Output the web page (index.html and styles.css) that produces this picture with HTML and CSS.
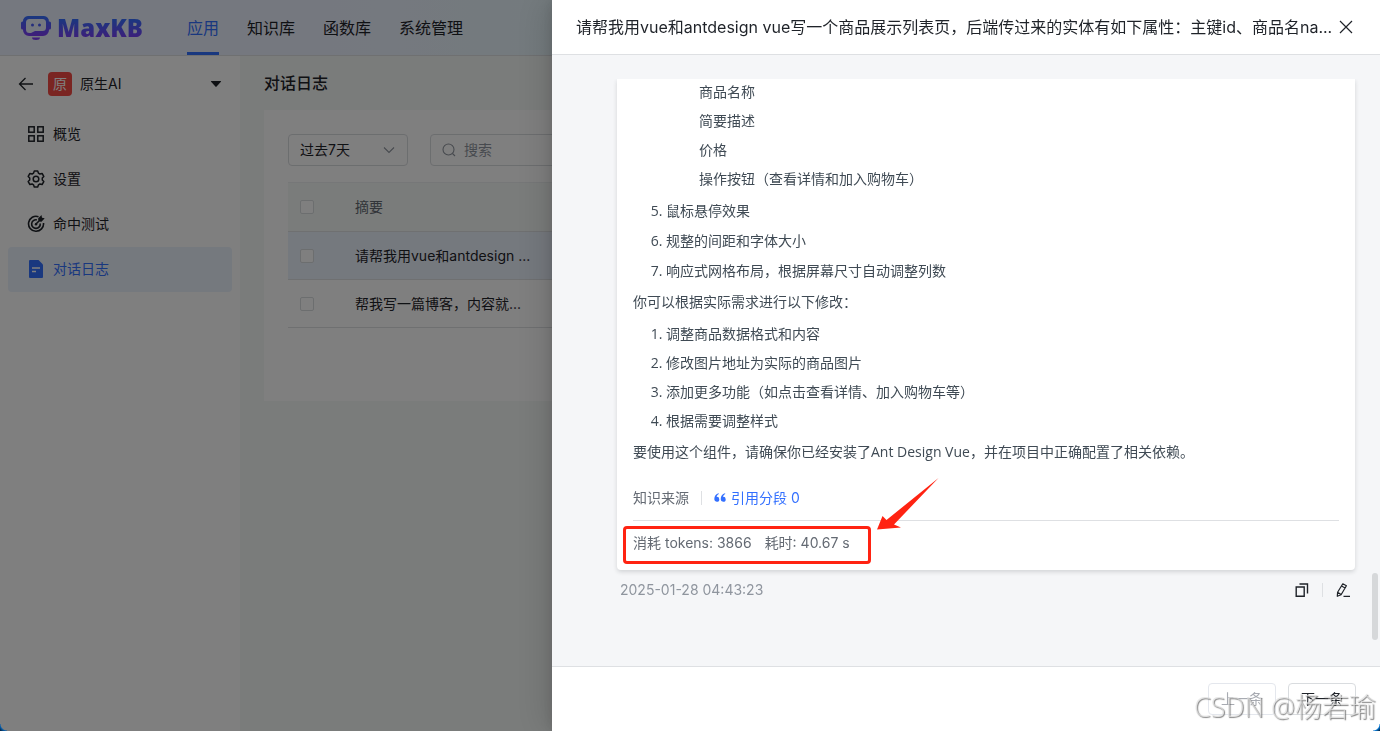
FILE: index.html
```html
<!DOCTYPE html>
<html lang="zh-CN">
<head>
<meta charset="utf-8">
<title>MaxKB</title>
<link rel="stylesheet" href="styles.css">
</head>
<body>
<div class="app">
  <header class="topbar">
    <a class="logo" href="#">
      <svg class="logo-icon" width="32" height="26" viewBox="0 0 32 26" aria-hidden="true">
        <defs>
          <linearGradient id="brand" x1="0" y1="0" x2="0" y2="1">
            <stop offset="0" stop-color="#3370ff"/>
            <stop offset="1" stop-color="#7f3bf5"/>
          </linearGradient>
        </defs>
        <path fill="url(#brand)" fill-rule="evenodd" d="M8 1h16a5 5 0 0 1 4.900 5.500h.6a1.500 1.500 0 0 1 1.500 1.500v5a1.500 1.500 0 0 1-1.500 1.500H29v.5a6 6 0 0 1-6 6H9a6 6 0 0 1-6-6v-.5h-.5A1.500 1.500 0 0 1 1 13V8a1.500 1.500 0 0 1 1.500-1.500H3A5 5 0 0 1 8 1zM9.500 4A3.500 3.500 0 0 0 6 7.500v7A3.500 3.500 0 0 0 9.500 18h1.500l4-2h7.500a3.500 3.500 0 0 0 3.500-3.500v-5A3.500 3.500 0 0 0 22.500 4z"/>
        <circle cx="12.500" cy="10" r="1.500" fill="#4a5cfa"/>
        <circle cx="19.500" cy="10" r="1.500" fill="#4a5cfa"/>
        <path fill="#7f3bf5" d="M12 22.500h8a4 2.500 0 0 1-8 0z"/>
      </svg>
      <span class="logo-text">MaxKB</span>
    </a>
    <nav class="tabs">
      <a class="tab tab-active" href="#">应用</a>
      <a class="tab" href="#">知识库</a>
      <a class="tab" href="#">函数库</a>
      <a class="tab" href="#">系统管理</a>
    </nav>
  </header>
  <div class="layout">
    <aside class="sidebar">
      <div class="app-switch">
        <button class="icon-button" aria-label="返回">
          <svg width="16" height="16" viewBox="0 0 16 16" fill="none" stroke="#1f2329" stroke-width="1.300"><path d="M15 8H2M7.500 2L1.500 8l6 6"/></svg>
        </button>
        <span class="avatar">原</span>
        <span class="app-name">原生AI</span>
        <button class="icon-button" aria-label="切换应用">
          <svg width="12" height="8" viewBox="0 0 12 8"><path fill="#1f2329" d="M1.500 1h9q1 0 .4.800L6.600 6.600q-.6.600-1.200 0L1.100 1.800Q.5 1 1.500 1z"/></svg>
        </button>
      </div>
      <nav class="menu">
        <a class="menu-item" href="#">
          <svg width="16" height="16" viewBox="0 0 16 16" fill="none" stroke="#1f2329" stroke-width="1.500"><rect x=".8" y=".8" width="5.400" height="5.400"/><rect x="9.800" y=".8" width="5.400" height="5.400"/><rect x=".8" y="9.800" width="5.400" height="5.400"/><rect x="9.800" y="9.800" width="5.400" height="5.400"/></svg>
          <span>概览</span>
        </a>
        <a class="menu-item" href="#">
          <svg width="18" height="18" viewBox="0 0 18 18" fill="none" stroke="#1f2329" stroke-width="1.500" stroke-linejoin="round"><path d="M7.300 1h3.400l.7 2.100 1.500.9 2.200-.5 1.700 2.900L15.300 8v2l1.500 1.600-1.700 2.900-2.200-.5-1.500.9-.7 2.100H7.300l-.7-2.100L5.100 14l-2.200.5-1.700-2.900L2.700 10V8L1.200 6.400l1.700-2.900 2.200.5 1.500-.9z"/><circle cx="9" cy="9" r="2.800"/></svg>
          <span>设置</span>
        </a>
        <a class="menu-item" href="#">
          <svg width="18" height="18" viewBox="0 0 18 18" fill="none" stroke="#1f2329" stroke-width="1.600"><path d="M11.500 1.700A7.500 7.500 0 1 0 16.500 8"/><path d="M9.800 4.900A4.300 4.300 0 1 0 13.200 8.500"/><path d="M8.500 9.500L12 6"/><path fill="#1f2329" stroke="none" d="M14.500 0l.5 2.800 2.700.5-3.200 3.500-3-.4-.4-3z"/><circle cx="9" cy="9.300" r="1.200" fill="#1f2329" stroke="none"/></svg>
          <span>命中测试</span>
        </a>
        <a class="menu-item menu-active" href="#">
          <svg width="16" height="18" viewBox="0 0 16 18"><path fill="#3370ff" d="M2 0h8.500L15 4.500V17a1 1 0 0 1-1 1H2a1 1 0 0 1-1-1V1a1 1 0 0 1 1-1z"/><path stroke="#fff" stroke-width="1.300" d="M4 8h8M4 11.500h4"/></svg>
          <span>对话日志</span>
        </a>
      </nav>
    </aside>
    <main class="main">
      <h1 class="page-title">对话日志</h1>
      <section class="panel">
        <div class="filters">
          <div class="select-wrap">
            <select class="select" aria-label="时间范围"><option>过去7天</option></select>
            <svg class="select-arrow" width="12" height="8" viewBox="0 0 12 8" fill="none" stroke="#8f959e" stroke-width="1.100"><path d="M1 1.500l5 5 5-5"/></svg>
          </div>
          <label class="search">
            <svg width="14" height="14" viewBox="0 0 14 14" fill="none" stroke="#8f959e" stroke-width="1.100"><circle cx="6.500" cy="6.500" r="5.500"/><path d="M10.500 10.500l2.500 2.500"/></svg>
            <input class="search-input" type="text" placeholder="搜索" aria-label="搜索">
          </label>
        </div>
        <table class="table">
          <thead>
            <tr><th class="check-col"><input class="check" type="checkbox" aria-label="全选"></th><th>摘要</th></tr>
          </thead>
          <tbody>
            <tr class="row-current"><td class="check-col"><input class="check" type="checkbox" aria-label="选择第1行"></td><td>请帮我用vue和antdesign ...</td></tr>
            <tr><td class="check-col"><input class="check" type="checkbox" aria-label="选择第2行"></td><td>帮我写一篇博客，内容就...</td></tr>
          </tbody>
        </table>
      </section>
    </main>
  </div>
</div>

<div class="overlay">
  <section class="drawer" role="dialog" aria-labelledby="drawer-title">
    <header class="drawer-header">
      <h2 class="drawer-title" id="drawer-title">请帮我用vue和antdesign vue写一个商品展示列表页，后端传过来的实体有如下属性：主键id、商品名na...</h2>
      <button class="icon-button" aria-label="关闭">
        <svg width="14" height="14" viewBox="0 0 14 14" fill="none" stroke="#1f2329" stroke-width="1.200"><path d="M1 1l12 12M13 1L1 13"/></svg>
      </button>
    </header>
    <div class="drawer-body">
      <div class="chat">
        <article class="card">
          <div class="markdown">
            <ul class="sublist">
              <li>商品名称</li>
              <li>简要描述</li>
              <li>价格</li>
              <li>操作按钮（查看详情和加入购物车）</li>
            </ul>
            <ol class="list" start="5">
              <li>鼠标悬停效果</li>
              <li>规整的间距和字体大小</li>
              <li>响应式网格布局，根据屏幕尺寸自动调整列数</li>
            </ol>
            <p class="para">你可以根据实际需求进行以下修改：</p>
            <ol class="list list-tight">
              <li>调整商品数据格式和内容</li>
              <li>修改图片地址为实际的商品图片</li>
              <li>添加更多功能（如点击查看详情、加入购物车等）</li>
              <li>根据需要调整样式</li>
            </ol>
            <p class="para">要使用这个组件，请确保你已经安装了Ant Design Vue，并在项目中正确配置了相关依赖。</p>
          </div>
          <div class="sources">
            <span>知识来源</span>
            <span class="divider"></span>
            <button class="quote">
              <svg width="12" height="10" viewBox="0 0 12 10" fill="#3370ff"><path d="M4.600.3C2 .8.300 3 .300 6.300a2.500 2.500 0 1 0 2.300-2.500C2.800 2.600 3.500 1.600 4.900 1zM11 .3C8.400.8 6.700 3 6.700 6.300A2.500 2.500 0 1 0 9 3.800c.2-1.200.9-2.200 2.300-2.800z"/></svg>
              <span>引用分段 0</span>
            </button>
          </div>
          <div class="usage">
            <span>消耗 tokens: 3866</span>
            <span>耗时: 40.67 s</span>
            <div class="highlight"></div>
            <svg class="arrow" width="64" height="54" viewBox="0 0 64 54"><path fill="#ff2312" d="M62.500 1L18 47.500l7 3L1 52.500 6.500 39l4 4z"/></svg>
          </div>
        </article>
        <div class="meta">
          <time>2025-01-28 04:43:23</time>
          <div class="actions">
            <button class="icon-button" aria-label="复制">
              <svg width="14" height="14" viewBox="0 0 14 14" fill="none" stroke="#1f2329" stroke-width="1.400"><path d="M1.200 4h8v9.300h-8zM4.500 1h8v9.500"/></svg>
            </button>
            <span class="divider"></span>
            <button class="icon-button" aria-label="编辑">
              <svg width="14" height="14" viewBox="0 0 14 14" fill="none" stroke="#1f2329" stroke-width="1.200" stroke-linejoin="round"><path d="M6.800.8l3.600 2-5.300 9L1.300 13.300l.300-4zM5.500 3l3.600 2M1.600 9.300l3.500 2.300M7.500 13.300H14"/></svg>
            </button>
          </div>
        </div>
      </div>
      <div class="thumb"></div>
    </div>
    <footer class="drawer-footer">
      <button class="button" disabled>上一条</button>
      <button class="button">下一条</button>
    </footer>
  </section>
</div>
<div class="watermark">CSDN @杨若瑜</div>
<div class="corner corner-left"></div>
<div class="corner corner-right"></div>
</body>
</html>
```

FILE: styles.css
```css
* { box-sizing: border-box; }

body {
  margin: 0;
  font-family: Inter, "Noto Sans CJK SC", sans-serif;
  font-size: 14px;
  line-height: 22px;
  color: #1f2329;
}

h1, h2, p, ul, ol { margin: 0; padding: 0; }
a { color: inherit; text-decoration: none; }
button, input, select { font: inherit; color: inherit; }
svg { display: block; flex: none; }

.icon-button {
  display: flex;
  padding: 0;
  border: 0;
  background: none;
}

.app {
  display: flex;
  flex-direction: column;
  height: 100vh;
  overflow: hidden;
}

.topbar {
  display: flex;
  align-items: stretch;
  height: 56px;
  flex: none;
  padding-left: 20px;
  background: linear-gradient(90deg, #ebf1ff 24%, #e5fbf8 56%, #f2ebfe 90%);
  border-bottom: 1px solid #dee0e3;
}

.logo { display: flex; align-items: center; gap: 5px; width: 167px; }

.logo-text {
  font-family: "Open Sans", sans-serif;
  font-weight: 800;
  font-size: 24px;
  line-height: 32px;
  background: linear-gradient(#3370ff 20%, #7f3bf5 85%);
  background-clip: text;
  color: transparent;
}

.tabs { display: flex; gap: 28px; font-size: 16px; }

.tab {
  display: flex;
  align-items: center;
  border-bottom: 3px solid transparent;
  border-top: 3px solid transparent;
}

.tab-active { color: #3370ff; border-bottom-color: #3370ff; }

.layout { display: flex; flex: 1; min-height: 0; }

.sidebar { width: 240px; flex: none; background: #fff; }

.app-switch {
  display: flex;
  align-items: center;
  height: 56px;
  padding: 0 18px;
}

.avatar {
  width: 24px;
  margin-left: 14px;
  border-radius: 4px;
  background: #f54a45;
  color: #fff;
  line-height: 24px;
  text-align: center;
}

.app-name { flex: 1; margin-left: 8px; }

.menu { padding: 0 8px; }

.menu-item {
  display: grid;
  grid-template-columns: 16px 1fr;
  align-items: center;
  justify-items: center;
  gap: 9px;
  height: 45px;
  padding: 0 0 2px 20px;
  border-radius: 4px;
}

.menu-item span { justify-self: start; }

.menu-active { background: #ebf2fc; color: #3370ff; }

.main { flex: 1; padding: 15px 24px; background: #f5f9f7; }

.page-title { font-size: 16px; font-weight: 500; line-height: 24px; }

.panel {
  margin-top: 15px;
  padding: 24px 24px 73px;
  background: #fff;
}

.filters { display: flex; gap: 22px; }

.select-wrap { position: relative; width: 120px; }

.select {
  appearance: none;
  width: 100%;
  height: 32px;
  padding: 0 11px;
  border: 1px solid #d9dcdf;
  border-radius: 4px;
  background: #fff;
}

.select-arrow { position: absolute; right: 13px; top: 12px; }

.search {
  display: flex;
  align-items: center;
  gap: 8px;
  width: 240px;
  height: 32px;
  padding: 0 11px;
  border: 1px solid #d9dcdf;
  border-radius: 4px;
}

.search-input { width: 100%; border: 0; padding: 0; background: none; outline: 0; }
.search-input::placeholder { color: #8f959e; }

.table {
  width: 100%;
  margin-top: 16px;
  border-spacing: 0;
  border-top: 1px solid #eceff0;
}

.table th, .table td {
  height: 49px;
  padding: 0 12px;
  border-bottom: 1px solid #dee0e3;
  text-align: left;
  font-weight: 400;
}

.table td { height: 48px; }
.table th { background: #f5f9f7; color: #646a73; }
.table .check-col { width: 55px; }
.row-current { background: #ebf2fc; }

.check {
  appearance: none;
  display: block;
  width: 14px;
  height: 14px;
  margin: 0;
  border: 1px solid #d9dcdf;
  border-radius: 2px;
  background: #fff;
}

.overlay {
  position: fixed;
  inset: 0;
  display: flex;
  justify-content: flex-end;
  background: rgba(0, 0, 0, 0.5);
}

.drawer {
  display: flex;
  flex-direction: column;
  width: 60%;
  background: #fff;
  box-shadow: -8px 0 32px rgba(0, 0, 0, 0.12), -2px 0 12px rgba(0, 0, 0, 0.1);
}

.drawer-header {
  display: flex;
  align-items: center;
  justify-content: space-between;
  height: 55px;
  flex: none;
  padding: 0 27px 0 24px;
  border-bottom: 1px solid #dee0e3;
}

.drawer-title {
  overflow: hidden;
  white-space: nowrap;
  font-size: 16px;
  font-weight: 400;
  line-height: 24px;
}

.drawer-body {
  position: relative;
  flex: 1;
  min-height: 0;
  padding-top: 24px;
  background: #f5f6f8;
}

.chat { height: 100%; padding: 0 25px 0 65px; overflow: hidden; }

.card {
  padding: 1px 16px 16px;
  border-radius: 0 0 4px 4px;
  background: #fff;
  box-shadow: 0 2px 4px rgba(31, 35, 41, 0.16);
}

.markdown {
  font-family: "Open Sans", "Noto Sans CJK SC", sans-serif;
  line-height: 24px;
  color: #3f4a54;
}

.sublist { padding-left: 66px; list-style: none; }
.sublist li + li { margin-top: 5px; }
.list { margin-top: 8px; padding-left: 33px; }
.list li + li { margin-top: 6px; }
.list-tight li + li { margin-top: 5px; }
.para { margin-top: 7px; }

.sources {
  display: flex;
  align-items: center;
  gap: 12px;
  margin-top: 23px;
  padding-bottom: 11px;
  border-bottom: 1px solid #dee0e3;
  color: #646a73;
}

.divider { width: 1px; height: 14px; background: #dee0e3; }

.quote {
  display: flex;
  align-items: center;
  gap: 5px;
  padding: 0;
  border: 0;
  background: none;
  color: #3370ff;
}

.usage {
  position: relative;
  display: flex;
  gap: 13px;
  padding-top: 11px;
  color: #646a73;
}

.highlight {
  position: absolute;
  left: -10px;
  top: 5px;
  width: 248px;
  height: 38px;
  border: 3px solid #ff2312;
  border-radius: 4px;
}

.arrow { position: absolute; left: 243px; top: -44px; }

.meta {
  display: flex;
  align-items: center;
  justify-content: space-between;
  padding: 9px 5px 0 3px;
  color: #8f959e;
}

.actions { display: flex; align-items: center; gap: 13px; }

.thumb {
  position: absolute;
  right: 2px;
  bottom: 26px;
  width: 6px;
  height: 67px;
  border-radius: 3px;
  background: #d6d8da;
}

.drawer-footer {
  display: flex;
  align-items: center;
  justify-content: flex-end;
  gap: 12px;
  height: 65px;
  flex: none;
  padding-right: 24px;
  border-top: 1px solid #dee0e3;
}

.button {
  width: 68px;
  height: 32px;
  padding: 0;
  border: 1px solid #d9dcdf;
  border-radius: 4px;
  background: #fff;
}

.button:disabled { border-color: #e4e7ed; color: #a8abb2; }

.watermark {
  position: fixed;
  right: 4px;
  bottom: 4px;
  font-family: "Open Sans", "Noto Sans CJK SC", sans-serif;
  font-size: 27px;
  line-height: 40px;
  font-weight: 300;
  color: rgba(225, 225, 225, 0.7);
  text-shadow: 1px 1px 1px rgba(80, 80, 80, 0.7);
  pointer-events: none;
}

.corner { position: fixed; bottom: 0; width: 7px; height: 7px; }
.corner-left { left: 0; background: radial-gradient(circle at 100% 0, transparent 6px, #0a5ea8 7px, #04294d 9px); }
.corner-right { right: 0; background: radial-gradient(circle at 0 0, transparent 6px, #0a78d0 7px, #04294d 9px); }
```
